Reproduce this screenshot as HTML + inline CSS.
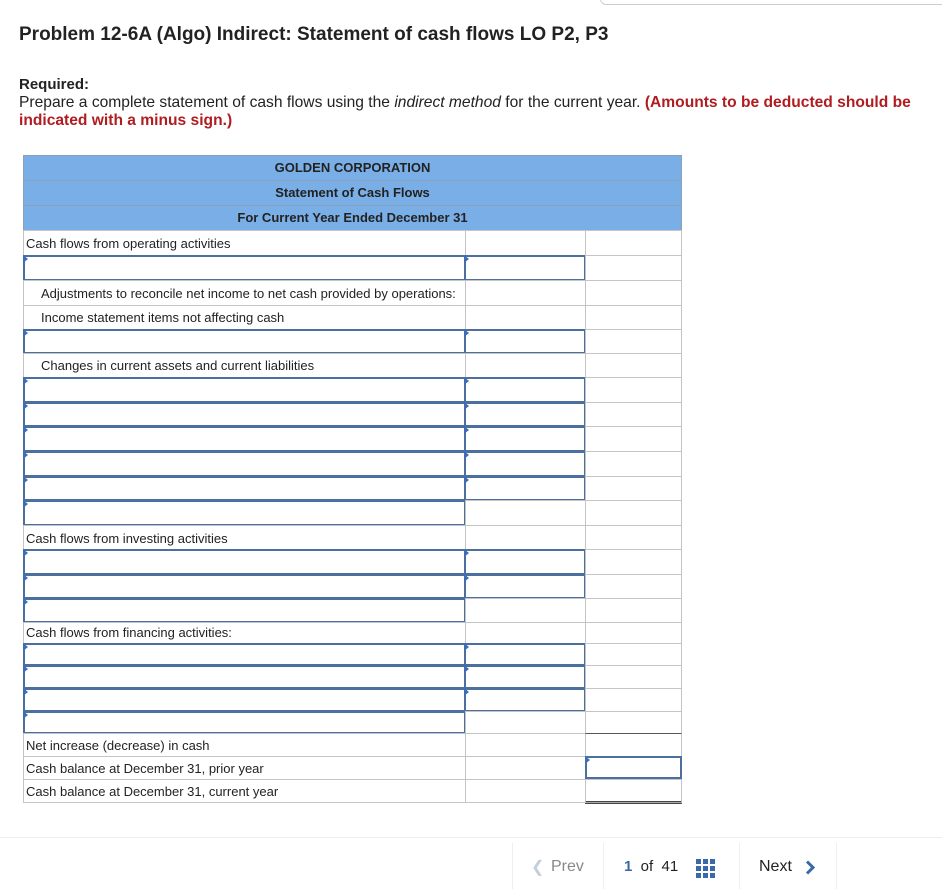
<!DOCTYPE html>
<html><head><meta charset="utf-8"><style>
body{margin:0;width:942px;height:896px;background:#fff;font-family:"Liberation Sans",Arial,sans-serif;color:#222;position:relative;overflow:hidden}
.a{position:absolute}
.t{font-size:13px;color:#222;white-space:nowrap}
.h{background:#7aaee6;border:1px solid #8a9fb8;box-sizing:border-box;text-align:center;font-weight:bold;font-size:13px;line-height:24px;color:#222}
.c{position:absolute;box-sizing:border-box;border:1px solid #c4c4c4}
.in{position:absolute;box-sizing:border-box;border:2px solid #4b6f9e;background:#fff}
.in:before{content:"";position:absolute;left:-2px;top:-2px;border-left:5px solid #3d6db4;border-top:4px solid transparent;border-bottom:4px solid transparent}
</style></head><body>
<div class="a" style="left:600px;top:-20px;width:360px;height:23px;border:1px solid #ccc;border-radius:6px"></div>
<div class="a" style="left:19px;top:24px;font-size:19px;font-weight:bold;color:#222">Problem 12-6A (Algo) Indirect: Statement of cash flows LO P2, P3</div>
<div class="a" style="left:19px;top:76px;font-size:15px;font-weight:bold">Required:</div>
<div class="a" style="left:19px;top:94px;font-size:15.6px;line-height:18px;width:920px">Prepare a complete statement of cash flows using the <i>indirect method</i> for the current year. <b style="color:#b01c20">(Amounts to be deducted should be indicated with a minus sign.)</b></div>

<div class="a h" style="left:23px;top:155px;width:659px;height:26px">GOLDEN CORPORATION</div>
<div class="a h" style="left:23px;top:180px;width:659px;height:26px">Statement of Cash Flows</div>
<div class="a h" style="left:23px;top:205px;width:659px;height:26px">For Current Year Ended December 31</div>

<div class="c" style="left:23px;top:230px;width:659px;height:573px;border-color:#aaa"></div>

<div class="c" style="left:23px;top:230px;width:443px;height:26px"></div><div class="c" style="left:465px;top:230px;width:121px;height:26px"></div><div class="c" style="left:585px;top:230px;width:97px;height:26px"></div>
<div class="a t" style="left:26px;top:236px">Cash flows from operating activities</div>
<div class="in" style="left:23px;top:255px;width:443px;height:26px"></div><div class="in" style="left:464px;top:255px;width:122px;height:26px"></div><div class="c" style="left:585px;top:255px;width:97px;height:26px"></div>

<div class="c" style="left:23px;top:280px;width:443px;height:26px"></div><div class="c" style="left:465px;top:280px;width:121px;height:26px"></div><div class="c" style="left:585px;top:280px;width:97px;height:26px"></div>
<div class="a t" style="left:41px;top:286px">Adjustments to reconcile net income to net cash provided by operations:</div>
<div class="c" style="left:23px;top:305px;width:443px;height:25px"></div><div class="c" style="left:465px;top:305px;width:121px;height:25px"></div><div class="c" style="left:585px;top:305px;width:97px;height:25px"></div>
<div class="a t" style="left:41px;top:310px">Income statement items not affecting cash</div>
<div class="in" style="left:23px;top:329px;width:443px;height:25px"></div><div class="in" style="left:464px;top:329px;width:122px;height:25px"></div><div class="c" style="left:585px;top:329px;width:97px;height:25px"></div>
<div class="c" style="left:23px;top:353px;width:443px;height:25px"></div><div class="c" style="left:465px;top:353px;width:121px;height:25px"></div><div class="c" style="left:585px;top:353px;width:97px;height:25px"></div>
<div class="a t" style="left:41px;top:358px">Changes in current assets and current liabilities</div>

<div class="in" style="left:23px;top:377px;width:443px;height:26px"></div><div class="in" style="left:464px;top:377px;width:122px;height:26px"></div><div class="c" style="left:585px;top:377px;width:97px;height:26px"></div>
<div class="in" style="left:23px;top:402px;width:443px;height:25px"></div><div class="in" style="left:464px;top:402px;width:122px;height:25px"></div><div class="c" style="left:585px;top:402px;width:97px;height:25px"></div>
<div class="in" style="left:23px;top:426px;width:443px;height:26px"></div><div class="in" style="left:464px;top:426px;width:122px;height:26px"></div><div class="c" style="left:585px;top:426px;width:97px;height:26px"></div>
<div class="in" style="left:23px;top:451px;width:443px;height:26px"></div><div class="in" style="left:464px;top:451px;width:122px;height:26px"></div><div class="c" style="left:585px;top:451px;width:97px;height:26px"></div>
<div class="in" style="left:23px;top:476px;width:443px;height:25px"></div><div class="in" style="left:464px;top:476px;width:122px;height:25px"></div><div class="c" style="left:585px;top:476px;width:97px;height:25px"></div>
<div class="in" style="left:23px;top:500px;width:443px;height:26px"></div><div class="c" style="left:465px;top:500px;width:121px;height:26px"></div><div class="c" style="left:585px;top:500px;width:97px;height:26px"></div>

<div class="c" style="left:23px;top:525px;width:443px;height:25px"></div><div class="c" style="left:465px;top:525px;width:121px;height:25px"></div><div class="c" style="left:585px;top:525px;width:97px;height:25px"></div>
<div class="a t" style="left:26px;top:531px">Cash flows from investing activities</div>
<div class="in" style="left:23px;top:549px;width:443px;height:26px"></div><div class="in" style="left:464px;top:549px;width:122px;height:26px"></div><div class="c" style="left:585px;top:549px;width:97px;height:26px"></div>
<div class="in" style="left:23px;top:574px;width:443px;height:25px"></div><div class="in" style="left:464px;top:574px;width:122px;height:25px"></div><div class="c" style="left:585px;top:574px;width:97px;height:25px"></div>
<div class="in" style="left:23px;top:598px;width:443px;height:25px"></div><div class="c" style="left:465px;top:598px;width:121px;height:25px"></div><div class="c" style="left:585px;top:598px;width:97px;height:25px"></div>

<div class="c" style="left:23px;top:622px;width:443px;height:22px"></div><div class="c" style="left:465px;top:622px;width:121px;height:22px"></div><div class="c" style="left:585px;top:622px;width:97px;height:22px"></div>
<div class="a t" style="left:26px;top:625px">Cash flows from financing activities:</div>
<div class="in" style="left:23px;top:643px;width:443px;height:23px"></div><div class="in" style="left:464px;top:643px;width:122px;height:23px"></div><div class="c" style="left:585px;top:643px;width:97px;height:23px"></div>
<div class="in" style="left:23px;top:665px;width:443px;height:24px"></div><div class="in" style="left:464px;top:665px;width:122px;height:24px"></div><div class="c" style="left:585px;top:665px;width:97px;height:24px"></div>
<div class="in" style="left:23px;top:688px;width:443px;height:24px"></div><div class="in" style="left:464px;top:688px;width:122px;height:24px"></div><div class="c" style="left:585px;top:688px;width:97px;height:24px"></div>
<div class="in" style="left:23px;top:711px;width:443px;height:23px"></div><div class="c" style="left:465px;top:711px;width:121px;height:23px"></div><div class="c" style="left:585px;top:711px;width:97px;height:23px"></div>

<div class="c" style="left:23px;top:733px;width:443px;height:24px"></div><div class="c" style="left:465px;top:733px;width:121px;height:24px"></div><div class="c" style="left:585px;top:733px;width:97px;height:24px;border-top:1px solid #555"></div>
<div class="a t" style="left:26px;top:738px">Net increase (decrease) in cash</div>
<div class="c" style="left:23px;top:756px;width:443px;height:24px"></div><div class="c" style="left:465px;top:756px;width:121px;height:24px"></div><div class="in" style="left:585px;top:756px;width:97px;height:23px"></div>
<div class="a t" style="left:26px;top:761px">Cash balance at December 31, prior year</div>
<div class="c" style="left:23px;top:779px;width:443px;height:24px"></div><div class="c" style="left:465px;top:779px;width:121px;height:24px"></div><div class="c" style="left:585px;top:779px;width:97px;height:25px;border-bottom:3px double #444"></div>
<div class="a t" style="left:26px;top:784px">Cash balance at December 31, current year</div>

<div class="a" style="left:0;top:837px;width:942px;height:1px;background:#eee"></div>
<div class="a" style="left:512px;top:843px;width:1px;height:46px;background:#eee"></div>
<div class="a" style="left:603px;top:843px;width:1px;height:46px;background:#eee"></div>
<div class="a" style="left:739px;top:843px;width:1px;height:46px;background:#eee"></div>
<div class="a" style="left:836px;top:843px;width:1px;height:46px;background:#eee"></div>
<div class="a" style="left:531px;top:857px;font-size:16px;color:#c5cfdc">&#10094;</div>
<div class="a" style="left:551px;top:858px;font-size:16px;color:#888">Prev</div>
<div class="a" style="left:624px;top:858px;font-size:15px;color:#222"><b style="color:#3a68a8">1</b> &nbsp;of&nbsp; 41</div>
<svg class="a" style="left:696px;top:859px" width="19" height="19" viewBox="0 0 19 19" fill="#3a68a8">
<rect x="0" y="0" width="5" height="5"/><rect x="7" y="0" width="5" height="5"/><rect x="14" y="0" width="5" height="5"/>
<rect x="0" y="7" width="5" height="5"/><rect x="7" y="7" width="5" height="5"/><rect x="14" y="7" width="5" height="5"/>
<rect x="0" y="14" width="5" height="5"/><rect x="7" y="14" width="5" height="5"/><rect x="14" y="14" width="5" height="5"/></svg>
<div class="a" style="left:759px;top:858px;font-size:16px;color:#222">Next</div>
<svg class="a" style="left:805px;top:860px" width="11" height="15" viewBox="0 0 11 15"><path d="M2 1.5L8 7.5L2 13.5" stroke="#3a68a8" stroke-width="3" fill="none"/></svg>
</body></html>
